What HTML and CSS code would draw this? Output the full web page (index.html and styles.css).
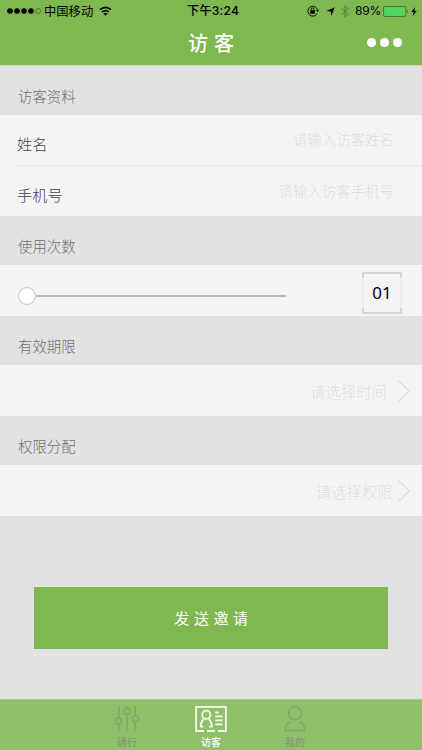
FILE: index.html
```html
<!DOCTYPE html>
<html lang="zh-CN">
<head>
<meta charset="utf-8">
<meta name="viewport" content="width=device-width, initial-scale=1">
<title>访客</title>
<link rel="stylesheet" href="styles.css">
</head>
<body>
<div class="app">
  <header class="header">
    <div class="status">
      <div class="status-left">
        <svg class="signal" width="35" height="8" viewBox="0 0 35 8"><circle cx="3" cy="4" r="2.8"/><circle cx="10" cy="4" r="2.8"/><circle cx="17" cy="4" r="2.8"/><circle cx="24" cy="4" r="2.8"/><circle class="empty" cx="31.2" cy="4" r="2.5"/></svg>
        <span class="carrier">中国移动</span>
        <svg class="wifi" width="13" height="10" viewBox="0 0 13 10"><path d="M1 3.7Q6.5-.9 12 3.7M3 6Q6.5 3.2 10 6" fill="none" stroke="#000" stroke-width="1.6"/><path d="M4.4 7.5Q6.5 5.9 8.6 7.5L6.5 9.8z"/></svg>
      </div>
      <div class="clock">下午3:24</div>
      <div class="status-right">
        <svg class="lock" width="12" height="12" viewBox="0 0 12 12"><path d="M10.2 8.4A4.9 4.9 0 1 1 10.6 5.2" fill="none" stroke="#000" stroke-width=".9"/><path d="M9 5.1h3l-1.5 2zM3.2 5.3h4.7v3.4H3.2z"/><path d="M4.2 5.5V4.3a1.35 1.35 0 0 1 2.7 0v1.2" fill="none" stroke="#000" stroke-width=".9"/></svg>
        <svg class="arrow" width="9" height="9" viewBox="0 0 9 9"><path d="M8.8.3 5.4 8.7 4.7 4.6.3 4z"/></svg>
        <svg class="bluetooth" width="8" height="13" viewBox="0 0 8 13"><path d="M.7 3.4 7.2 9.3 4 12.2V.8L7.2 3.7.7 9.6" fill="none" stroke="#527535" stroke-width=".9"/></svg>
        <span class="percent">89%</span>
        <svg class="battery" width="26" height="11" viewBox="0 0 26 11"><rect x=".5" y=".5" width="22.4" height="10" rx="1.5" fill="none" stroke="#48672f" stroke-width=".8"/><rect x="1.4" y="1.4" width="19.7" height="8.2" rx=".6" fill="#4cd864"/><path d="M24 3.7q1.7 1.8 0 3.6z" fill="#304a20"/></svg>
        <svg class="bolt" width="6" height="9" viewBox="0 0 6 9"><path d="M4.1 0 .2 5h2.3L1.7 9 5.8 3.8H3.4z"/></svg>
      </div>
    </div>
    <div class="navbar">
      <h1 class="title">访客</h1>
      <div class="more"><i></i><i></i><i></i></div>
    </div>
  </header>

  <main class="content">
    <h2 class="section">访客资料</h2>
    <div class="card">
      <div class="row"><span class="label">姓名</span><span class="hint">请输入访客姓名</span></div>
      <div class="row second"><span class="label">手机号</span><span class="hint">请输入访客手机号</span></div>
    </div>
    <h2 class="section">使用次数</h2>
    <div class="card count">
      <div class="slider"><span class="knob"></span><span class="track"></span></div>
      <div class="number"><svg width="40" height="42" viewBox="0 0 40 42"><path d="M1 5v32M39 5v32" stroke="#ececec" stroke-width="1.6"/><path d="M1 6V1h38v5M1 36v5h38v-5" fill="none" stroke="#d5d5d5" stroke-width="2"/></svg><span>01</span></div>
    </div>
    <h2 class="section">有效期限</h2>
    <div class="card pick time"><span>请选择时间</span><svg class="chevron" width="14" height="24" viewBox="0 0 14 24"><path d="M1.5 1.5 12.3 12 1.5 22.5"/></svg></div>
    <h2 class="section">权限分配</h2>
    <div class="card pick"><span>请选择权限</span><svg class="chevron" width="14" height="24" viewBox="0 0 14 24"><path d="M1.5 1.5 12.3 12 1.5 22.5"/></svg></div>
    <button class="send">发送邀请</button>
  </main>

  <nav class="tabs">
    <div class="tab">
      <svg width="26" height="28" viewBox="0 0 26 28"><path d="M5 1v12M5 19.2V26M13 1v2.2M13 9.2V26M21 1v9.5M21 17v9"/><circle cx="4.5" cy="16" r="3.1"/><circle cx="13" cy="6.2" r="3.1"/><circle cx="21.5" cy="13.8" r="3.1"/></svg>
      <span>通行</span>
    </div>
    <div class="tab active">
      <svg width="32" height="28" viewBox="0 0 32 28"><path d="M9.2 26H1.1V1.8h29.8V26h-8.1M12 26h8"/><circle cx="11.3" cy="9.8" r="4.1"/><path d="M5.6 22.2c0-4 .8-6 3.2-8.2M17 22.2c0-4-.8-6-3.2-8.2M5.6 21.7h2.8M14.2 21.7H17M20.3 7.5h3.4M20.3 11.4h7.2M20.3 15.4h7.2M20.3 19.3h7.2"/></svg>
      <span>访客</span>
    </div>
    <div class="tab">
      <svg width="22" height="28" viewBox="0 0 22 28"><circle cx="11" cy="8.3" r="6.5"/><path d="M6.8 17C3.6 18 1.5 20.3 1.5 23v2.6h19V23c0-2.7-2.1-5-5.3-6"/></svg>
      <span>我的</span>
    </div>
  </nav>
</div>
</body>
</html>
```
FILE: styles.css
```css
* { box-sizing: border-box; }

body {
  margin: 0;
  background: #e2e2e2;
  font-family: "Noto Sans CJK SC", sans-serif;
}

svg { display: block; flex: none; }

.app {
  display: flex;
  flex-direction: column;
  width: 422px;
  height: 750px;
  overflow: hidden;
}

.header {
  height: 66px;
  flex: none;
  background: #7fb750;
  border-bottom: 1px solid #c8d6bb;
}

.status {
  display: grid;
  grid-template-columns: 1fr 54px 1fr;
  align-items: center;
  height: 22px;
  font-size: 12.3px;
  line-height: 22px;
}

.status-left, .status-right { display: flex; align-items: center; }
.status-left { padding-left: 7px; }
.signal { margin-right: 2px; }
.empty { fill: none; stroke: #3d5a27; stroke-width: .7; }
.wifi { margin-left: 6px; }
.clock { padding-left: 3px; font-weight: 500; white-space: nowrap; }
.clock, .percent { font-family: Inter, "Noto Sans CJK SC", sans-serif; }
.clock { font-size: 12.2px; letter-spacing: .2px; }
.status-right { justify-content: flex-end; padding-right: 5px; }
.arrow { margin-left: 7px; }
.bluetooth { margin-left: 6px; }
.percent { margin-left: 6px; width: 25px; font-size: 12px; letter-spacing: -.2px; }
.battery { margin-left: 3px; }
.bolt { margin-left: 2px; }

.navbar {
  display: grid;
  grid-template-columns: 1fr auto 1fr;
  align-items: center;
  height: 41px;
}

.title {
  grid-column: 2;
  margin: 0;
  padding-left: 6px;
  color: #fff;
  font-size: 20px;
  font-weight: 500;
  line-height: 40px;
  letter-spacing: 6px;
}

.more { display: flex; gap: 4.5px; justify-content: flex-end; padding-right: 20px; }
.more i { width: 8.7px; height: 8.7px; border-radius: 50%; background: #fff; }

.content { flex: 1; }

.section {
  height: 49px;
  margin: 0;
  padding: 5px 18px 0;
  color: #707070;
  font-size: 14.4px;
  font-weight: 300;
  line-height: 49px;
}

.card { height: 51px; background: #f4f4f4; }
.card:first-of-type { height: 101px; }

.row {
  display: flex;
  justify-content: space-between;
  height: 51px;
  margin-left: 17px;
  padding-right: 28px;
  border-bottom: 1px solid #e7e8e9;
  line-height: 57px;
}

.row.second { height: 50px; border: 0; line-height: 56px; }
.label { color: #414152; font-size: 15.2px; font-weight: 300; }
.hint { color: #dcdcdc; font-size: 14.45px; font-weight: 300; line-height: 48px; }
.second .hint { line-height: 49px; }

.count {
  display: flex;
  align-items: center;
  justify-content: space-between;
  padding: 4px 20px 0 18px;
}

.slider { display: flex; align-items: center; width: 268px; padding-top: 6px; }
.knob { width: 18px; height: 18px; border: 1.5px solid #c7c7c7; border-radius: 50%; background: #fff; }
.track { flex: 1; height: 2px; background: #b7b7b7; }

.number { display: grid; place-items: center; width: 40px; color: #000; font-family: "Noto Sans", sans-serif; font-size: 17px; line-height: 42px; }
.number > * { grid-area: 1 / 1; }

.pick {
  display: flex;
  align-items: center;
  justify-content: flex-end;
  gap: 4px;
  padding: 1px 11px 0 0;
  color: #dedede;
  font-size: 15.4px;
  font-weight: 300;
}
.time { gap: 10px; }
.chevron path { fill: none; stroke: #dedede; stroke-width: 1.3; }

.send {
  display: block;
  width: 354px;
  height: 62px;
  margin: 71px 0 0 34px;
  padding: 0 0 2px 5px;
  border: 0;
  background: #7fb750;
  color: #fff;
  font-family: inherit;
  font-size: 15px;
  font-weight: 400;
  letter-spacing: 4.6px;
}

.tabs {
  display: flex;
  justify-content: center;
  height: 51px;
  flex: none;
  border-top: 1px solid #a6c487;
  background: #8fc06a;
}

.tab {
  display: flex;
  flex-direction: column;
  align-items: center;
  width: 84px;
  padding-top: 5px;
  color: #7f9a70;
  font-size: 10px;
  font-weight: 500;
  line-height: 18px;
}
.tab svg { fill: none; stroke: #81a967; stroke-width: 1.6; }
.tab.active { color: #fff; }
.tab.active svg { stroke: #f4f9ec; stroke-width: 1.8; }
```
